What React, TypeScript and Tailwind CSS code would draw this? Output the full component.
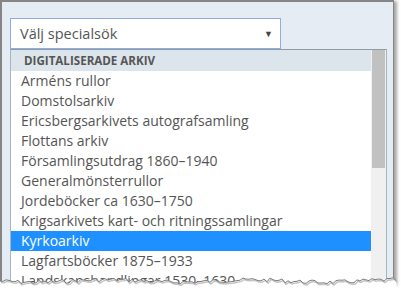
import React from 'react'

const items = [
  'Arméns rullor',
  'Domstolsarkiv',
  'Ericsbergsarkivets autografsamling',
  'Flottans arkiv',
  'Församlingsutdrag 1860–1940',
  'Generalmönsterrullor',
  'Jordeböcker ca 1630–1750',
  'Krigsarkivets kart- och ritningssamlingar',
  'Kyrkoarkiv',
  'Lagfartsböcker 1875–1933',
  'Landskapshandlingar 1530–1630',
]

// jagged "torn paper" edge along the bottom
function tornPath(width: number) {
  const pts: string[] = []
  let seed = 7
  const rnd = () => {
    seed = (seed * 9301 + 49297) % 233280
    return seed / 233280
  }
  for (let x = 0; x <= width; x += 3) {
    const y = 6 + (rnd() - 0.5) * 4 + Math.sin(x / 23) * 1.2
    pts.push(`${x},${y.toFixed(1)}`)
  }
  return pts
}

function TornEdge() {
  const pts = tornPath(398)
  const fill = `M0,${pts[0].split(',')[1]} L${pts.join(' L')} L398,20 L0,20 Z`
  const line = `M${pts.join(' L')}`
  return (
    <svg className="absolute left-0 top-[275px]" width="401" height="17" viewBox="0 0 401 17">
      <path d={fill} fill="#ffffff" />
      <path d={line} fill="none" stroke="#9a9a9a" strokeWidth="1.4" transform="translate(1,1.5)" opacity="0.6" />
      <path d={line} fill="none" stroke="#7d7d7d" strokeWidth="1" />
    </svg>
  )
}

export default function App() {
  return (
    <div className="relative w-[401px] h-[292px] bg-white overflow-hidden" style={{ fontFamily: '"Open Sans", sans-serif' }}>
      <div className="w-[394px] h-[285px] border-l-2 border-t-2 border-r border-[#858585] bg-[#e6ecf3] shadow-[3px_1px_3px_rgba(0,0,0,0.35)] pl-[8px] pt-[16px]">
        {/* select */}
        <div className="w-[271px] h-[31px] border border-[#8eaee0] bg-white flex items-center justify-between pl-[9px] pr-[7px] text-[14.5px] text-[#555]">
          <span>Välj specialsök</span>
          <span className="text-[9px] text-[#444]">▼</span>
        </div>
        {/* dropdown list */}
        <div className="w-[377px] h-[240px] border border-t-[#8e9aa6] border-x-[#a8b4c2] border-b-0 bg-white flex">
          <div className="flex-1 flex flex-col">
            <div className="h-[21px] bg-[#dde5ec] pl-[13px] text-[11.6px] font-bold text-[#555] leading-[21px]">
              DIGITALISERADE ARKIV
            </div>
            {items.map((t) => (
              <div
                key={t}
                className={
                  t === 'Kyrkoarkiv'
                    ? 'h-[20px] pl-[10px] text-[14px] leading-[20px] bg-[#1e90ff] text-white'
                    : 'h-[20px] pl-[10px] text-[14px] leading-[20px] text-[#555] whitespace-nowrap'
                }
              >
                {t}
              </div>
            ))}
          </div>
          <div className="w-[15px] bg-[#f0f0f0] flex flex-col">
            <div className="h-[118px] mx-[1px] bg-[#c1c1c1]" />
          </div>
        </div>
      </div>
      <TornEdge />
    </div>
  )
}
